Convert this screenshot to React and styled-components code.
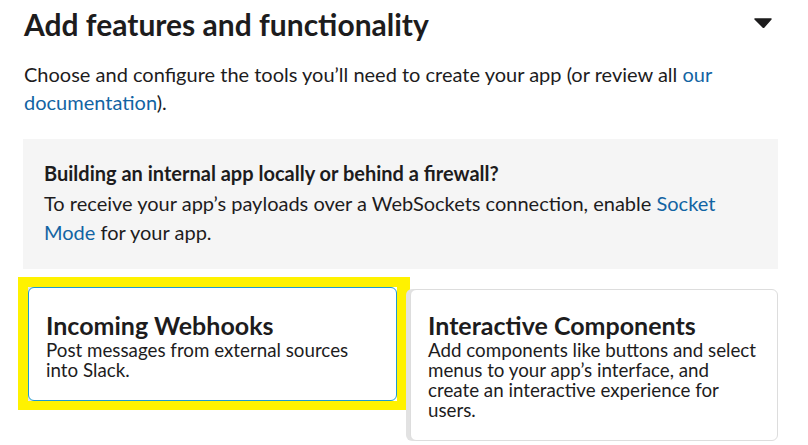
import React from "react";
import styled, { createGlobalStyle } from "styled-components";

const Global = createGlobalStyle`
  html, body { margin: 0; padding: 0; background: #fff; }
  body { font-family: Lato, "Open Sans", "Noto Sans", sans-serif; color: #1d1c1d; -webkit-font-smoothing: antialiased; }
`;

const Page = styled.div`
  width: 755px;
  padding: 0 30px 0 23px;
`;

const Header = styled.div`
  display: flex;
  align-items: flex-start;
  justify-content: space-between;
  padding: 4px 6px 0 1px;
  height: 40px;
`;

const Title = styled.h2`
  margin: 0;
  font-size: 30px;
  font-weight: 700;
  line-height: 40px;
`;

const Caret = styled.svg`
  width: 18px;
  height: 10px;
  margin-top: 14px;
`;

const Intro = styled.p`
  margin: 16px 0 0 1px;
  font-size: 20px;
  line-height: 28px;
`;

const Link = styled.a`
  color: #1264a3;
  text-decoration: none;
`;

const Notice = styled.div`
  margin-top: 23px;
  background: #f5f5f5;
  padding: 20px 21px 21px;
  font-size: 20px;
  line-height: 29.5px;
`;

const NoticeTitle = styled.div`
  font-weight: 700;
`;

const Cards = styled.div`
  display: grid;
  grid-template-columns: 369px 368px;
  gap: 13px;
  padding-left: 5px;
  margin-top: 18px;
  align-items: start;
`;

const Card = styled.div`
  position: relative;
  background: #fff;
  border: 1px solid ${(p) => (p.$active ? "#1d9bd1" : "#dddddd")};
  border-radius: 6px;
  box-shadow: -4px 0 0 #e2e2e2;
  padding: ${(p) => (p.$active ? "22px" : "20px")} 17px 20px 17px;
  margin-top: ${(p) => (p.$active ? "0" : "2px")};
`;

const Highlight = styled.div`
  position: absolute;
  top: -11px;
  left: -11px;
  right: -14px;
  bottom: -10px;
  border: 10px solid #fff200;
  border-right-width: 13px;
  border-bottom-width: 9px;
  pointer-events: none;
`;

const CardTitle = styled.div`
  font-size: 25px;
  font-weight: 700;
  line-height: 30px;
`;

const CardText = styled.div`
  font-size: 18.75px;
  line-height: 20px;
`;

export default function App() {
  return (
    <>
      <Global />
      <Page>
        <Header>
          <Title>Add features and functionality</Title>
          <Caret viewBox="0 0 18 10">
            <path d="M1 1 H17 L9.5 9.5 Z" fill="#1d1c1d" stroke="#1d1c1d" strokeWidth="1.5" strokeLinejoin="round" />
          </Caret>
        </Header>
        <Intro>
          Choose and configure the tools you’ll need to create your app (or review all{" "}
          <Link href="#">our documentation</Link>).
        </Intro>
        <Notice>
          <NoticeTitle>Building an internal app locally or behind a firewall?</NoticeTitle>
          To receive your app’s payloads over a WebSockets connection, enable{" "}
          <Link href="#">Socket Mode</Link> for your app.
        </Notice>
        <Cards>
          <Card $active>
            <Highlight />
            <CardTitle>Incoming Webhooks</CardTitle>
            <CardText>Post messages from external sources into Slack.</CardText>
          </Card>
          <Card>
            <CardTitle>Interactive Components</CardTitle>
            <CardText>
              Add components like buttons and select menus to your app’s interface, and create an
              interactive experience for users.
            </CardText>
          </Card>
        </Cards>
      </Page>
    </>
  );
}
